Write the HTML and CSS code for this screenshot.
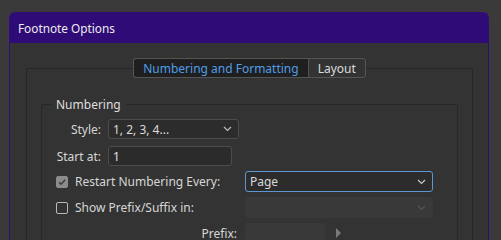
FILE: index.html
```html
<!DOCTYPE html>
<html>
<head>
<meta charset="utf-8">
<link rel="stylesheet" href="styles.css">
</head>
<body>
<div class="dialog">
  <div class="titlebar">Footnote Options</div>
  <div class="dbody">
    <div class="panel">
      <div class="tabs">
        <div class="tab active">Numbering and Formatting</div>
        <div class="tab">Layout</div>
      </div>
      <fieldset class="group">
        <legend>Numbering</legend>
        <div class="row">
          <span class="lbl">Style:</span>
          <div class="select style-sel"><span>1, 2, 3, 4...</span><svg class="chev" width="9" height="6" viewBox="0 0 9 6"><path d="M1 1l3.5 3.5L8 1" fill="none" stroke="#bdbdbd" stroke-width="1.2"/></svg></div>
        </div>
        <div class="row gap7">
          <span class="lbl">Start at:</span>
          <div class="input start-in">1</div>
        </div>
        <div class="row crow gap5">
          <span class="cb checked"><svg width="10" height="10" viewBox="0 0 10 10"><path d="M2 5.2l2 2L8.2 2.8" fill="none" stroke="#3a3a3a" stroke-width="1.5"/></svg></span>
          <span class="clbl">Restart Numbering Every:</span>
          <div class="select wide focus"><span>Page</span><svg class="chev" width="9" height="6" viewBox="0 0 9 6"><path d="M1 1l3.5 3.5L8 1" fill="none" stroke="#c8c8c8" stroke-width="1.2"/></svg></div>
        </div>
        <div class="row crow gap5">
          <span class="cb"></span>
          <span class="clbl">Show Prefix/Suffix in:</span>
          <div class="select wide disabled"><span></span><svg class="chev" width="9" height="6" viewBox="0 0 9 6"><path d="M1 1l3.5 3.5L8 1" fill="none" stroke="#555" stroke-width="1.2"/></svg></div>
        </div>
        <div class="row gap5">
          <span class="plbl">Prefix:</span>
          <div class="input disabled prefix-in"></div>
          <svg class="tri" width="6" height="10" viewBox="0 0 6 10"><path d="M0 0l5 5-5 5z" fill="#7a7a7a"/></svg>
        </div>
      </fieldset>
    </div>
  </div>
</div>
</body>
</html>
```
FILE: styles.css
```css
html, body {
  margin: 0;
  padding: 0;
}
body {
  background: #3a3a3a;
  width: 501px;
  height: 240px;
  overflow: hidden;
  font-family: "Noto Sans", "Open Sans", sans-serif;
  font-size: 12px;
  color: #d6d6d6;
}
.dialog {
  margin: 12px 0 0 9px;
  width: 478px;
  border: 1px solid #330d7a;
  border-bottom: none;
  border-radius: 6px 6px 0 0;
  background: #333333;
  height: 260px;
}
.titlebar {
  height: 30px;
  background: #2e0b76;
  border-radius: 5px 5px 0 0;
  color: #ececec;
  font-size: 11.8px;
  display: flex;
  align-items: center;
  padding-left: 8px;
}
.dbody {
  padding: 25px 15px 0 16px;
}
.panel {
  border: 1px solid #262626;
  border-radius: 2px;
  height: 300px;
  padding: 0 14px;
}
.tabs {
  display: flex;
  justify-content: center;
  margin-top: -11px;
}
.tab {
  height: 18px;
  border: 1px solid #555;
  background: #333;
  display: flex;
  align-items: center;
  padding: 0 9px;
  border-radius: 0 3px 3px 0;
  color: #dcdcdc;
}
.tab.active {
  background: #1f1f1f;
  color: #4f9de8;
  border-right: none;
  border-radius: 3px 0 0 3px;
}
.group {
  margin: 18px 0 0 0;
  border: 1px solid #282828;
  border-radius: 2px;
  padding: 6px 0 0 0;
  min-width: 0;
  height: 200px;
}
.group legend {
  margin-left: 9px;
  padding: 0 5px;
  color: #dedede;
}
.row {
  display: flex;
  align-items: center;
}
.gap7 { margin-top: 7px; }
.gap5 { margin-top: 5px; }
.lbl {
  width: 59px;
  text-align: right;
  margin-right: 7px;
}
.select {
  box-sizing: border-box;
  height: 20px;
  border: 1px solid #4c4c4c;
  border-radius: 3px;
  background: #2c2c2c;
  display: flex;
  align-items: center;
  justify-content: space-between;
  padding: 0 6px 0 4px;
  color: #dadada;
}
.style-sel { width: 131px; }
.input {
  box-sizing: border-box;
  height: 20px;
  border: 1px solid #4c4c4c;
  border-radius: 3px;
  background: #2b2b2b;
  padding-left: 4px;
  display: flex;
  align-items: center;
  color: #e0e0e0;
}
.start-in { width: 124px; }
.crow { padding-left: 14px; }
.cb {
  box-sizing: border-box;
  width: 12px;
  height: 12px;
  border: 1px solid #b8b8b8;
  border-radius: 2px;
  display: flex;
  align-items: center;
  justify-content: center;
}
.cb.checked {
  background: #8c8c8c;
  border-color: #8c8c8c;
}
.clbl {
  width: 170px;
  margin-left: 7px;
}
.wide {
  width: 188px;
  height: 21px;
}
.focus {
  border-color: #5d97d0;
}
.select.disabled {
  background: #393939;
  border-color: #393939;
}
.plbl {
  width: 195px;
  text-align: right;
  margin-right: 8px;
}
.input.disabled {
  background: #393939;
  border-color: #393939;
}
.prefix-in { width: 80px; }
.tri { margin-left: 11px; }
```
